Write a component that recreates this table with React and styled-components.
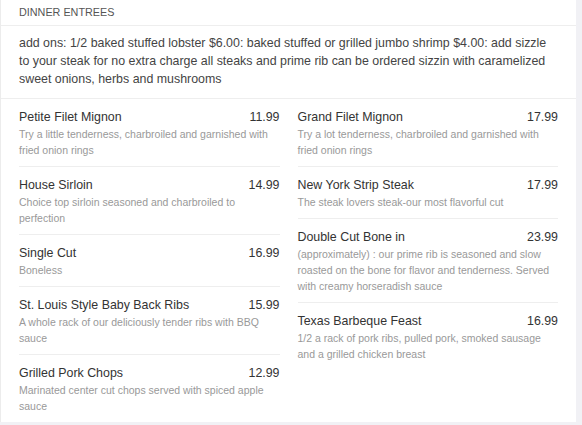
import React from "react";
import styled, { createGlobalStyle } from "styled-components";

const GlobalStyle = createGlobalStyle`
  body {
    margin: 0;
    background: #f1f1f5;
    font-family: "Liberation Sans", Arial, sans-serif;
  }
`;

const Card = styled.section`
  width: 576px;
  background: #fff;
  border-left: 1px solid #ececec;
  box-sizing: border-box;
`;

const Header = styled.h2`
  margin: 0;
  padding: 5px 18px;
  font-size: 10.8px;
  line-height: 15px;
  font-weight: normal;
  text-transform: uppercase;
  color: #555;
  border-bottom: 1px solid #eee;
`;

const Notes = styled.p`
  margin: 0;
  padding: 8px 18px 10px;
  font-size: 12.4px;
  line-height: 18px;
  color: #444;
  border-bottom: 1px solid #eee;
`;

const Columns = styled.div`
  display: grid;
  grid-template-columns: 1fr 1fr;
  column-gap: 18px;
  padding: 0 18px;
`;

const Column = styled.div`
  display: flex;
  flex-direction: column;
`;

const Item = styled.div`
  padding: 9px 0 8px;
  border-bottom: ${(p) => (p.$last ? "none" : "1px solid #eee")};
`;

const ItemHead = styled.div`
  display: flex;
  justify-content: space-between;
  font-size: 12.4px;
  line-height: 18px;
  color: #333;
`;

const Desc = styled.div`
  font-size: 10.5px;
  line-height: 16px;
  color: #999;
`;

const left = [
  ["Petite Filet Mignon", "11.99", "Try a little tenderness, charbroiled and garnished with fried onion rings"],
  ["House Sirloin", "14.99", "Choice top sirloin seasoned and charbroiled to perfection"],
  ["Single Cut", "16.99", "Boneless"],
  ["St. Louis Style Baby Back Ribs", "15.99", "A whole rack of our deliciously tender ribs with BBQ sauce"],
  ["Grilled Pork Chops", "12.99", "Marinated center cut chops served with spiced apple sauce"],
];

const right = [
  ["Grand Filet Mignon", "17.99", "Try a lot tenderness, charbroiled and garnished with fried onion rings"],
  ["New York Strip Steak", "17.99", "The steak lovers steak-our most flavorful cut"],
  ["Double Cut Bone in", "23.99", "(approximately) : our prime rib is seasoned and slow roasted on the bone for flavor and tenderness. Served with creamy horseradish sauce"],
  ["Texas Barbeque Feast", "16.99", "1/2 a rack of pork ribs, pulled pork, smoked sausage and a grilled chicken breast"],
];

function MenuColumn({ items }) {
  return (
    <Column>
      {items.map(([name, price, desc], i) => (
        <Item key={name} $last={i === items.length - 1}>
          <ItemHead>
            <span>{name}</span>
            <span>{price}</span>
          </ItemHead>
          <Desc>{desc}</Desc>
        </Item>
      ))}
    </Column>
  );
}

export default function App() {
  return (
    <>
      <GlobalStyle />
      <Card>
        <Header>Dinner Entrees</Header>
        <Notes>
          add ons: 1/2 baked stuffed lobster $6.00: baked stuffed or grilled jumbo shrimp $4.00: add sizzle
          to your steak for no extra charge all steaks and prime rib can be ordered sizzin with caramelized
          sweet onions, herbs and mushrooms
        </Notes>
        <Columns>
          <MenuColumn items={left} />
          <MenuColumn items={right} />
        </Columns>
      </Card>
    </>
  );
}
